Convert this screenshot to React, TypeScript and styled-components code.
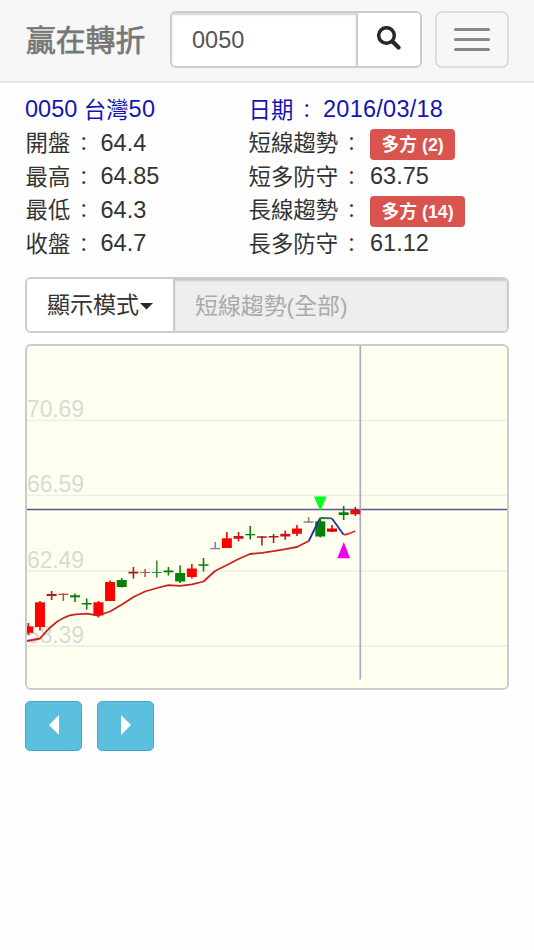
import React from "react";
import styled, { createGlobalStyle } from "styled-components";

const GlobalStyle = createGlobalStyle`
  * { box-sizing: border-box; }
  body {
    margin: 0;
    background: #fefefe;
    color: #333;
    font: 22.4px/33.5px "Liberation Sans", "Noto Sans CJK TC", sans-serif;
  }
  button, input { font: inherit; margin: 0; }
`;

const Page = styled.div`
  width: 534px;
  height: 950px;
  background: #fefefe;
  overflow: hidden;
`;

const Navbar = styled.header`
  display: flex;
  align-items: center;
  height: 83px;
  padding: 0 25px 3px;
  background: #f7f7f7;
  border-bottom: 2px solid #e8e8e8;
`;

const Brand = styled.h1`
  width: 145px;
  margin: 0;
  padding: 3px 0 0 1px;
  color: #777;
  font-size: 29.8px;
  font-weight: 400;
  line-height: 56px;
  white-space: nowrap;
  -webkit-text-stroke: 0.7px #777;
`;

const Search = styled.form`
  display: flex;
  width: 252px;
  height: 57px;
  border: 2px solid #ccc;
  border-radius: 6px;
  background: #fff;
  overflow: hidden;
`;

const SearchInput = styled.input`
  width: 184px;
  padding: 3px 20px 0;
  border: 0;
  background: #fff;
  box-shadow: inset 0 2px 2px rgba(0, 0, 0, 0.16);
  color: #555;
  font-size: 23.5px;
  outline: none;
`;

const SearchButton = styled.button`
  display: flex;
  flex: 1;
  align-items: center;
  justify-content: center;
  padding: 0 0 3px;
  border: 0;
  border-left: 2px solid #ccc;
  background: #fff;
`;

const MenuButton = styled.button`
  display: flex;
  flex-direction: column;
  align-items: center;
  justify-content: center;
  gap: 7px;
  width: 74px;
  height: 57px;
  margin-left: auto;
  padding: 0;
  border: 2px solid #ddd;
  border-radius: 7px;
  background: transparent;
`;

const MenuBar = styled.span`
  width: 36px;
  height: 3px;
  border-radius: 2px;
  background: #888;
`;

const Content = styled.main`
  padding: 10px 25px 0;
`;

const Quote = styled.section`
  display: grid;
  grid-template-columns: 223px 1fr;
  height: 168px;
`;

const Column = styled.div`
  display: grid;
  grid-template-rows: repeat(5, 33.5px);
`;

const Line = styled.div<{ $heading?: boolean }>`
  display: flex;
  align-items: center;
  color: ${({ $heading }) => ($heading ? "#1414b0" : "#333")};
  white-space: pre;
`;

const Term = styled.span<{ $width: number }>`
  display: flex;
  flex: none;
  width: ${({ $width }) => $width}px;
  padding: 2px 0 0 0.5px;
`;

const Colon = styled.span`
  padding: 1px 0 0 4px;
  font-size: 19px;
`;

const Value = styled.span<{ $wide?: boolean }>`
  font-size: 23.5px;
  letter-spacing: ${({ $wide }) => ($wide ? "0.25px" : "0")};
`;

const Name = styled.span`
  padding-top: 2px;
`;

const Badge = styled.span`
  display: flex;
  align-items: center;
  height: 31px;
  margin-top: 3px;
  padding: 0 11.5px;
  border-radius: 4px;
  background: #d9534f;
  color: #fff;
  font-size: 17.8px;
  font-weight: 700;
  line-height: 30px;
`;

const ModeGroup = styled.div`
  display: flex;
  height: 56px;
  margin-top: 16px;
  border: 2px solid #ccc;
  border-radius: 6px;
  overflow: hidden;
`;

const ModeButton = styled.button`
  display: flex;
  align-items: center;
  gap: 1px;
  width: 146px;
  padding: 2px 0 0 20px;
  border: 0;
  background: #fff;
  color: #333;
  font-size: 23px;
  white-space: nowrap;
`;

const ModeValue = styled.div`
  flex: 1;
  padding-left: 20px;
  border-left: 2px solid #ccc;
  background: #eee;
  box-shadow: inset 0 2px 2px rgba(0, 0, 0, 0.16);
  color: #aaa;
  font-size: 22.9px;
  line-height: 54px;
`;

const ChartPanel = styled.section`
  height: 346px;
  margin-top: 11px;
  border: 2px solid #ccc;
  border-radius: 6px;
  background: #fffff0;
  overflow: hidden;
`;

const ChartSvg = styled.svg`
  display: block;
`;

const Pager = styled.nav`
  display: flex;
  gap: 15px;
  margin-top: 11px;
`;

const PagerButton = styled.button`
  display: flex;
  align-items: center;
  justify-content: center;
  width: 57px;
  height: 50px;
  padding: 0 0 3px;
  border: 1.5px solid #46a9c5;
  border-radius: 5px;
  background: #5bc0de;
`;

const RED = "#ff0000";
const CRIMSON = "#cf1118";
const BRICK = "#a91d1d";
const GREEN = "#078007";
const GRAY = "#888888";

// body top, body bottom, high, low, colour
type Candle = [number, number, number, number, string];

const candles: Candle[] = [
  [626.5, 632.8, 623, 635, RED],
  [602.3, 627, 601, 630.5, RED],
  [594, 596, 591, 600, BRICK],
  [593.7, 595, 593.5, 601, "#bd4b42"],
  [595.3, 597.3, 593.5, 602, GREEN],
  [603, 604.5, 598.5, 609.5, GREEN],
  [602.3, 615.5, 601, 617.5, RED],
  [582, 601, 580.5, 601, RED],
  [580, 587, 578, 587.5, GREEN],
  [571.7, 573.5, 567, 578.5, BRICK],
  [572, 573, 569, 577, "#c3554d"],
  [572, 573, 560.5, 577.5, "#398c39"],
  [570.5, 572.3, 567, 575.5, GREEN],
  [573, 581.5, 565.5, 583, GREEN],
  [568.5, 577, 564, 578.5, RED],
  [564.3, 565.8, 558, 571.5, GREEN],
  [547.8, 549.3, 542, 549, GRAY],
  [538.3, 548, 532, 548, RED],
  [536, 538.8, 532, 541.5, CRIMSON],
  [534, 535.3, 526, 539.5, GREEN],
  [536.3, 537.8, 536, 545.5, BRICK],
  [536, 537.5, 534, 543, BRICK],
  [533.8, 536.5, 530.5, 539.8, CRIMSON],
  [528.5, 533.8, 525, 536, "#f00808"],
  [521.3, 522.8, 517, 522.5, GRAY],
  [521.3, 536.5, 519, 537.5, GREEN],
  [528.5, 531.7, 525, 532, "#e00000"],
  [512.3, 515, 506, 520, GREEN],
  [510, 514.3, 507, 516, "#e00c14"],
];

const gridLines = [
  { y: 420.5, label: "70.69" },
  { y: 495.5, label: "66.59" },
  { y: 571, label: "62.49" },
  { y: 646, label: "58.39" },
];

const candleX = (index: number) => 28.3 + index * 11.68;

function SearchIcon() {
  return (
    <svg width="24" height="24" viewBox="0 0 24 24" fill="none" stroke="#292929" aria-hidden="true">
      <circle cx="9.5" cy="9.5" r="7.8" strokeWidth="3.5" />
      <path d="M15.5 15.5 21.5 21.5" strokeWidth="4.2" strokeLinecap="round" />
    </svg>
  );
}

function Chart() {
  return (
    <ChartSvg width="480" height="342" viewBox="27 346 480 342">
      {gridLines.map(({ y, label }) => (
        <g key={label}>
          <path d={`M27 ${y}H507`} stroke="#ebecec" strokeWidth="1.7" />
          <text x="27" y={y - 3.5} fill="#dadad5" fontSize="23" textLength="57">
            {label}
          </text>
        </g>
      ))}
      <path d="M27 509.5H507" stroke="#55558f" strokeWidth="1.4" />
      <path d="M360.3 346V679.5" stroke="#aaaacb" strokeWidth="1.7" />
      {candles.map(([top, bottom, high, low, color], i) => (
        <g key={i} fill={color}>
          <rect x={candleX(i) - 5} y={top} width="10" height={bottom - top} />
          <rect x={candleX(i) - 0.8} y={high} width="1.6" height={low - high} />
        </g>
      ))}
      <g fill="none" strokeWidth="1.8" strokeLinejoin="round">
        <path
          d="M27 641 L40 638.5 C44 634 48 629 52 626 C56 622 60 619.5 63.5 618 C68 615.5 72 614.5 76 614.3 L87 613.6 L98 615.5 L110 611.5 L122 604.5 L133.5 597 L145 591.5 L157 588 L168.5 585.2 L180 585.8 L192 584.3 L203.5 581.5 L215 571 L227 565 L238.5 559 L250 554 L262 552.8 L273.5 551.2 L285.5 549.2 L297 547 L308.8 541"
          stroke="#c9231c"
        />
        <path d="M308.8 541 L318 522 L320.3 518" stroke="#252fa6" />
        <path d="M320.3 518 L332 518.4" stroke="#207837" />
        <path d="M332 518.4 L343.7 534.8" stroke="#252fa6" />
        <path d="M343.7 534.8 L348 534 L355.3 531" stroke="#d2342b" />
      </g>
      <path d="M314 496.5H326.5L320.3 511Z" fill="#00ff18" />
      <path d="M343.8 542 337.3 558.3H350.1Z" fill="#f000f0" />
    </ChartSvg>
  );
}

type FieldProps = {
  label: string;
  width: number;
  heading?: boolean;
  children: React.ReactNode;
};

function Field({ label, width, heading, children }: FieldProps) {
  return (
    <Line $heading={heading}>
      <Term $width={width}>
        {label}
        <Colon>：</Colon>
      </Term>
      {children}
    </Line>
  );
}

export default function App() {
  return (
    <>
      <GlobalStyle />
      <Page>
        <Navbar>
          <Brand>贏在轉折</Brand>
          <Search onSubmit={(event) => event.preventDefault()}>
            <SearchInput defaultValue="0050" aria-label="股票代號" />
            <SearchButton type="submit" aria-label="搜尋">
              <SearchIcon />
            </SearchButton>
          </Search>
          <MenuButton type="button" aria-label="選單">
            <MenuBar />
            <MenuBar />
            <MenuBar />
          </MenuButton>
        </Navbar>
        <Content>
          <Quote>
            <Column>
              <Line $heading>
                <Value>0050 </Value><Name>台灣</Name><Value $wide>50</Value>
              </Line>
              <Field label="開盤" width={75.5}><Value>64.4</Value></Field>
              <Field label="最高" width={75.5}><Value>64.85</Value></Field>
              <Field label="最低" width={75.5}><Value>64.3</Value></Field>
              <Field label="收盤" width={75.5}><Value>64.7</Value></Field>
            </Column>
            <Column>
              <Field label="日期" width={75} heading><Value $wide>2016/03/18</Value></Field>
              <Field label="短線趨勢" width={122}><Badge>多方 (2)</Badge></Field>
              <Field label="短多防守" width={122}><Value>63.75</Value></Field>
              <Field label="長線趨勢" width={122}><Badge>多方 (14)</Badge></Field>
              <Field label="長多防守" width={122}><Value>61.12</Value></Field>
            </Column>
          </Quote>
          <ModeGroup>
            <ModeButton type="button">
              顯示模式
              <svg width="13" height="8" viewBox="0 0 13 8" aria-hidden="true">
                <path d="M0 1H13L6.5 7.5Z" fill="#292929" />
              </svg>
            </ModeButton>
            <ModeValue>短線趨勢(全部)</ModeValue>
          </ModeGroup>
          <ChartPanel>
            <Chart />
          </ChartPanel>
          <Pager>
            <PagerButton type="button" aria-label="上一頁">
              <svg width="10" height="20" viewBox="0 0 10 20" aria-hidden="true">
                <path d="M10 0V20L0 10Z" fill="#fff" />
              </svg>
            </PagerButton>
            <PagerButton type="button" aria-label="下一頁">
              <svg width="10" height="20" viewBox="0 0 10 20" aria-hidden="true">
                <path d="M0 0V20L10 10Z" fill="#fff" />
              </svg>
            </PagerButton>
          </Pager>
        </Content>
      </Page>
    </>
  );
}
